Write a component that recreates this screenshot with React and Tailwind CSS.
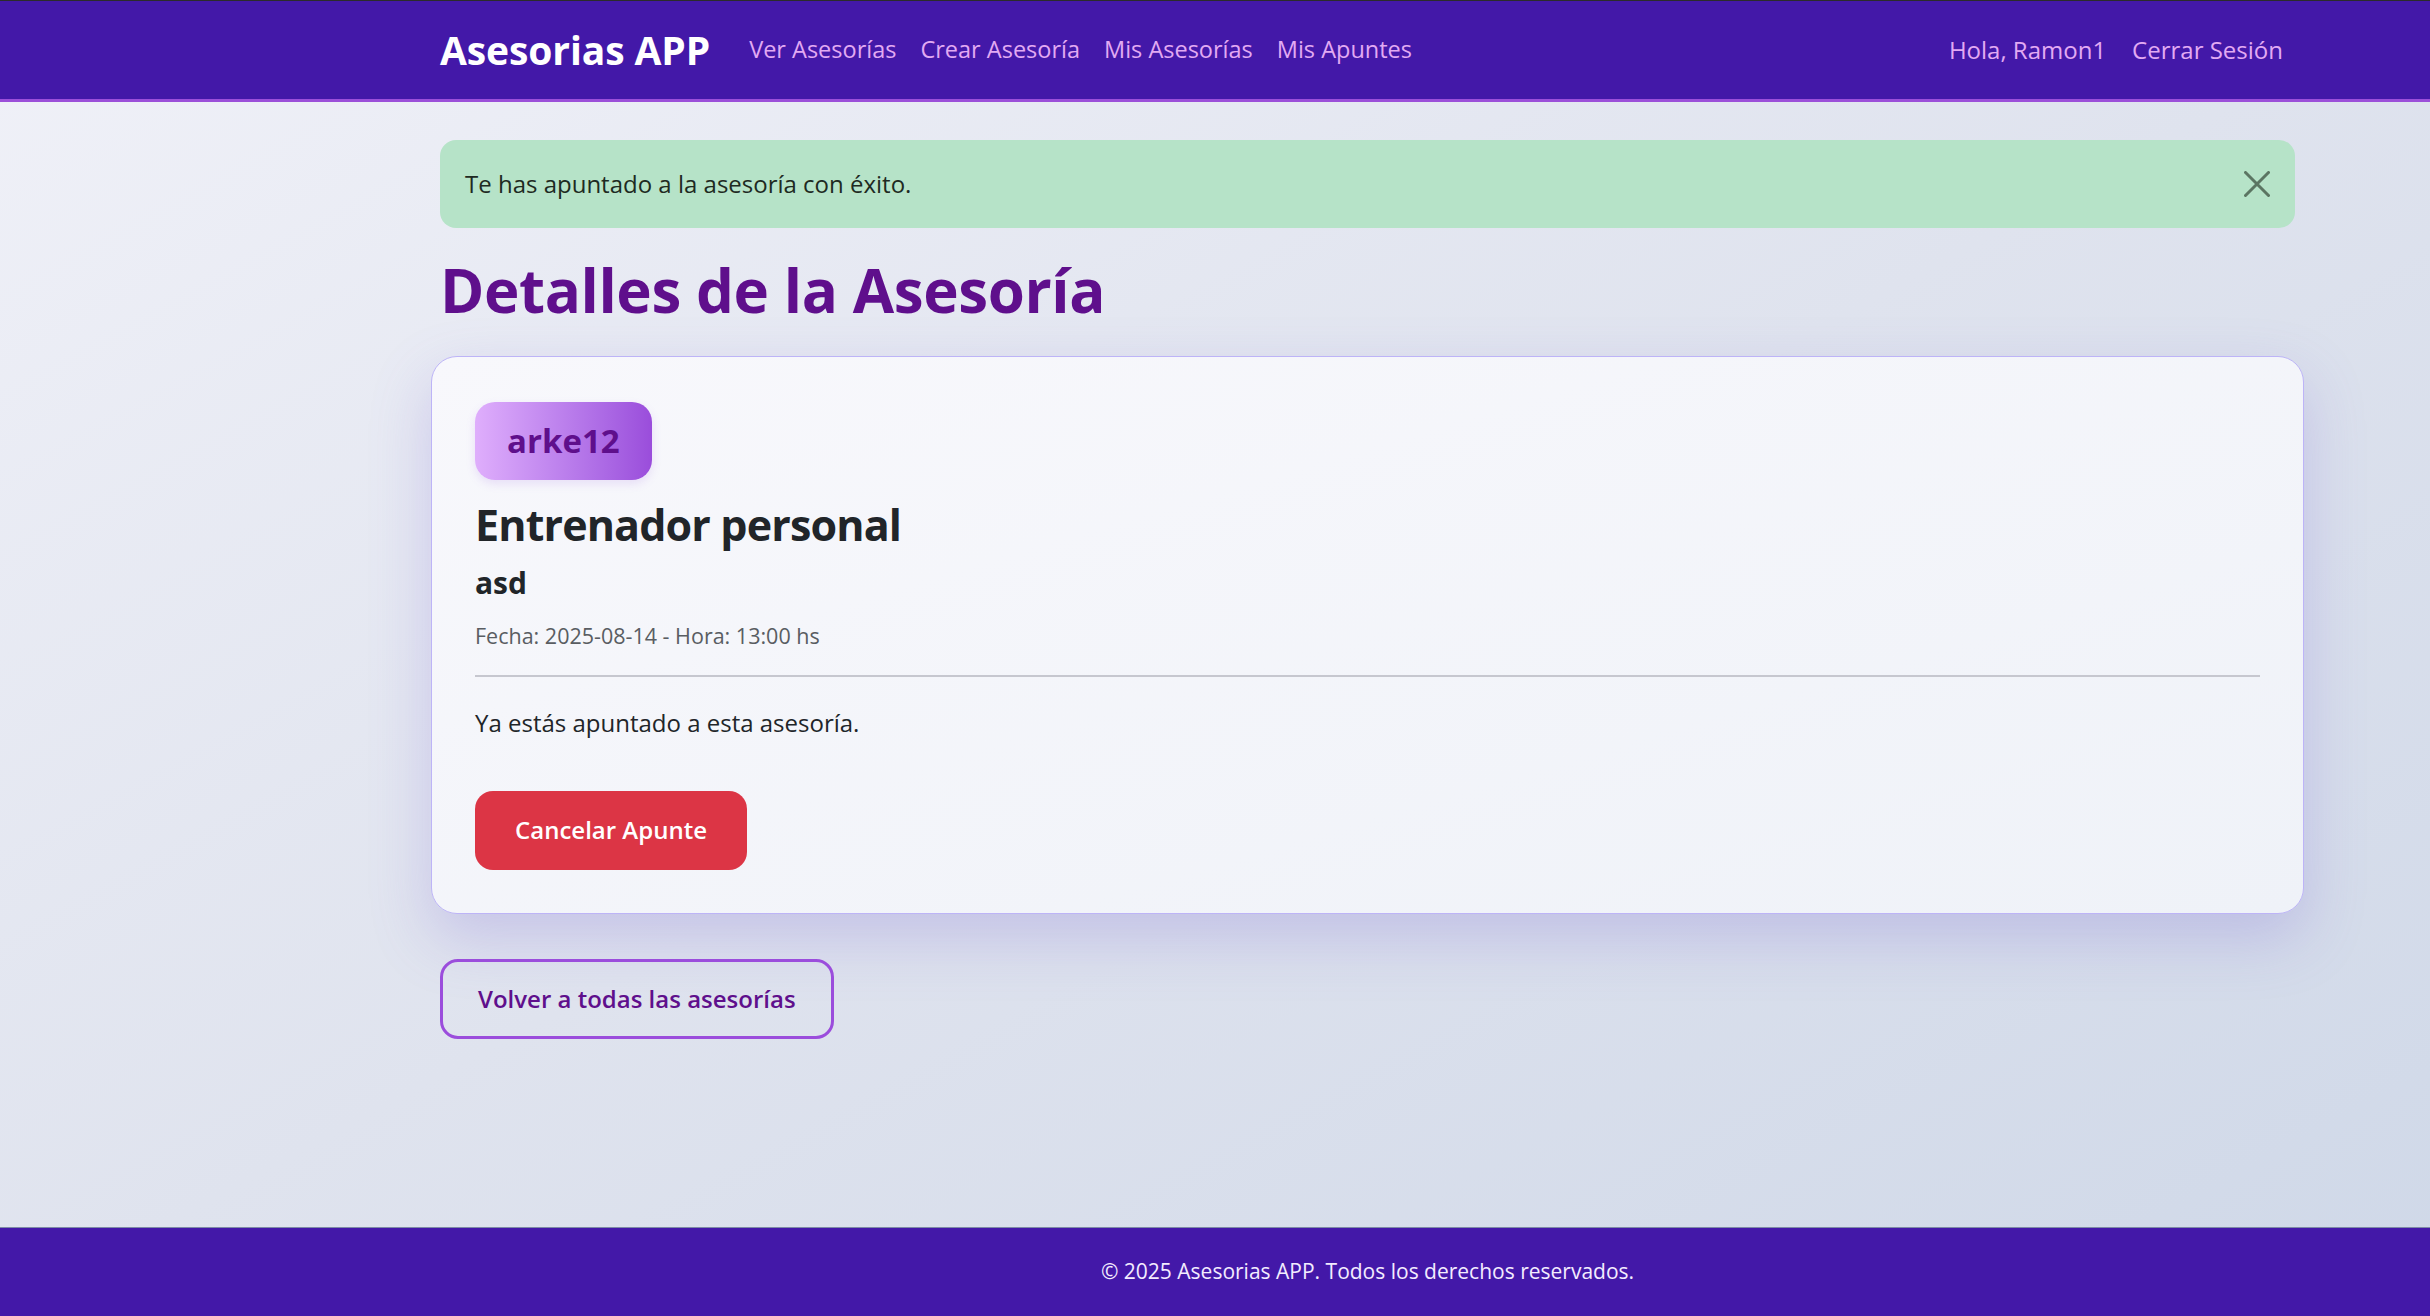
const navLinks = ["Ver Asesorías", "Crear Asesoría", "Mis Asesorías", "Mis Apuntes"];

function Navbar() {
  return (
    <header className="h-[102px] shrink-0 border-t border-t-[#2b2b2b] border-b-[3px] border-b-[#9b4fd9] bg-[#4318a8]">
      <div className="flex h-full items-center pl-[440px] pr-[147px]">
        <a className="text-[39px] font-bold tracking-[-0.1px] text-white">Asesorias APP</a>
        <nav className="ml-[39px] flex gap-[24px] text-[23.5px] text-[#e2aaf3]">
          {navLinks.map((l) => (
            <a key={l}>{l}</a>
          ))}
        </nav>
        <div className="ml-auto flex gap-[26px] text-[24px] text-[#e2aaf3]">
          <span>Hola, Ramon1</span>
          <a>Cerrar Sesión</a>
        </div>
      </div>
    </header>
  );
}

function Alert() {
  return (
    <div className="flex h-[88px] items-center justify-between rounded-[16px] bg-[#b6e3c8] pl-[25px] pr-[25px] text-[24px] text-[#1e2a22]">
      <span>Te has apuntado a la asesoría con éxito.</span>
      {/* cerrar */}
      <svg width="26" height="26" viewBox="0 0 26 26" className="text-[#5b7562]">
        <path d="M1.5 1.5 L24.5 24.5 M24.5 1.5 L1.5 24.5" stroke="currentColor" strokeWidth="3" strokeLinecap="round" />
      </svg>
    </div>
  );
}

function Card() {
  return (
    <div className="-mx-[9px] mt-[30px] rounded-[26px] border-[1.5px] border-[#bdb4f7] bg-gradient-to-br from-[#f8f8fc] to-[#eff2f8] px-[43px] pt-[45px] pb-[43px] shadow-[0_24px_60px_rgba(120,100,210,0.25)]">
      <div className="inline-flex h-[78px] items-center rounded-[20px] bg-gradient-to-r from-[#dfaefc] to-[#9a4ddb] px-[32px] text-[33px] font-bold text-[#5f0f8c] shadow-[0_4px_10px_rgba(150,90,220,0.15)]">
        arke12
      </div>
      <h2 className="mt-[19px] text-[43px] font-bold leading-[1.2] tracking-[-0.85px] text-[#212529]">Entrenador personal</h2>
      <h4 className="mt-[14px] text-[30px] font-bold leading-[1.2] text-[#212529]">asd</h4>
      <p className="mt-[19px] text-[21.5px] text-[#595d62]">Fecha: 2025-08-14 - Hora: 13:00 hs</p>
      <hr className="mt-[23px] border-t-[2px] border-[#c6c7cf]" />
      <p className="mt-[28px] text-[24px] text-[#212529]">Ya estás apuntado a esta asesoría.</p>
      <button className="mt-[50px] h-[79px] rounded-[18px] bg-[#dc3545] px-[40px] text-[24px] font-semibold text-white">
        Cancelar Apunte
      </button>
    </div>
  );
}

export default function App() {
  return (
    <div className="flex min-h-screen flex-col bg-gradient-to-br from-[#f0f1f8] via-[#dfe3ee] to-[#cfd8e8] font-['Open_Sans',sans-serif]">
      <Navbar />
      <main className="flex-1 pl-[440px] pr-[135px] pt-[38px]">
        <Alert />
        <h1 className="mt-[26px] text-[60px] font-bold leading-[1.2] tracking-[-0.4px] text-[#5f0f8c]">Detalles de la Asesoría</h1>
        <Card />
        <button className="mt-[45px] h-[80px] rounded-[18px] border-[3px] border-[#9b4ddc] px-[35px] text-[24px] font-semibold text-[#5f0f8c]">
          Volver a todas las asesorías
        </button>
      </main>
      <footer className="flex h-[89px] shrink-0 items-center border-t border-[#7d8aa6] bg-[#4318a8] pl-[440px] pr-[135px]">
        <p className="w-full text-center text-[21px] text-[#f3ecff]">© 2025 Asesorias APP. Todos los derechos reservados.</p>
      </footer>
    </div>
  );
}
